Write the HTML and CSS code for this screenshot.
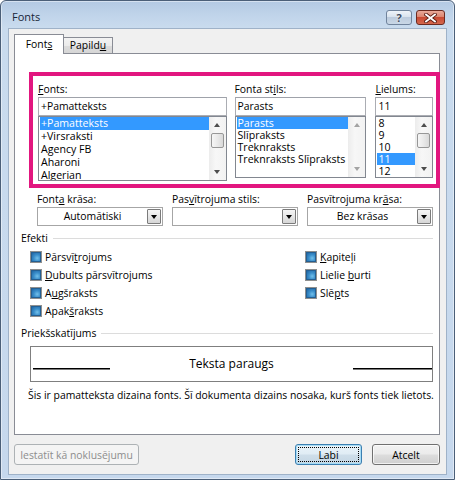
FILE: index.html
```html
<!DOCTYPE html>
<html lang="lv">
<head>
<meta charset="utf-8">
<title>Fonts</title>
<link rel="stylesheet" href="styles.css">
</head>
<body>
<div class="window">
  <div class="titlebar">
    <span class="title">Fonts</span>
    <div class="caption">
      <button class="cap help">?</button>
      <button class="cap close">
        <svg width="13" height="10" viewBox="0 0 13 10">
          <path d="M2 1.5 L11 8.5 M11 1.5 L2 8.5" stroke="#5b1d14" stroke-width="3.6" stroke-linecap="square"/>
          <path d="M2 1.5 L11 8.5 M11 1.5 L2 8.5" stroke="#fff" stroke-width="1.8" stroke-linecap="square"/>
        </svg>
      </button>
    </div>
  </div>

  <div class="client">
    <div class="tabs">
      <div class="tab active">Font<u>s</u></div>
      <div class="tab">Papild<u>u</u></div>
    </div>

    <div class="panel">
      <div class="highlight">
        <div class="col col-font">
          <div class="label"><u>F</u>onts:</div>
          <div class="field">+Pamatteksts</div>
          <div class="list list-tall">
            <ul class="items rows13">
              <li class="sel">+Pamatteksts</li>
              <li>+Virsraksti</li>
              <li>Agency FB</li>
              <li>Aharoni</li>
              <li>Algerian</li>
            </ul>
            <div class="scrollbar">
              <span class="arrow up"></span>
              <span class="track"><span class="thumb"></span></span>
              <span class="arrow down"></span>
            </div>
          </div>
        </div>

        <div class="col col-style">
          <div class="label">Fonta st<u>i</u>ls:</div>
          <div class="field">Parasts</div>
          <div class="list">
            <ul class="items">
              <li class="sel">Parasts</li>
              <li>Slīpraksts</li>
              <li>Treknraksts</li>
              <li>Treknraksts Slīpraksts</li>
            </ul>
            <div class="scrollbar disabled">
              <span class="arrow up"></span>
              <span class="track"></span>
              <span class="arrow down"></span>
            </div>
          </div>
        </div>

        <div class="col col-size">
          <div class="label"><u>L</u>ielums:</div>
          <div class="field">11</div>
          <div class="list">
            <ul class="items">
              <li>8</li>
              <li>9</li>
              <li>10</li>
              <li class="sel">11</li>
              <li>12</li>
            </ul>
            <div class="scrollbar">
              <span class="arrow up"></span>
              <span class="track"><span class="thumb"></span></span>
              <span class="arrow down"></span>
            </div>
          </div>
        </div>
      </div>

      <div class="combos">
        <div class="combo-col">
          <div class="label">Font<u>a</u> krāsa:</div>
          <div class="combo"><span class="value">Automātiski</span><span class="drop"></span></div>
        </div>
        <div class="combo-col">
          <div class="label">Pas<u>v</u>ītrojuma stils:</div>
          <div class="combo"><span class="value"></span><span class="drop"></span></div>
        </div>
        <div class="combo-col">
          <div class="label">Pasvītrojuma kr<u>ā</u>sa:</div>
          <div class="combo"><span class="value">Bez krāsas</span><span class="drop"></span></div>
        </div>
      </div>

      <div class="group"><span>Efekti</span><i class="rule-line"></i></div>
      <div class="effects">
        <label class="effect"><span class="cb"></span><span>Pārsvī<u>t</u>rojums</span></label>
        <label class="effect"><span class="cb"></span><span><u>K</u>apiteļi</span></label>
        <label class="effect"><span class="cb"></span><span><u>D</u>ubults pārsvītrojums</span></label>
        <label class="effect"><span class="cb"></span><span>Lielie <u>b</u>urti</span></label>
        <label class="effect"><span class="cb"></span><span>A<u>u</u>gšraksts</span></label>
        <label class="effect"><span class="cb"></span><span>Slē<u>p</u>ts</span></label>
        <label class="effect"><span class="cb"></span><span>Apak<u>š</u>raksts</span></label>
      </div>

      <div class="group group-preview"><span>Priekšskatījums</span><i class="rule-line"></i></div>
      <div class="preview">
        <span class="baseline left"></span>
        <span class="sample">Teksta paraugs</span>
        <span class="baseline right"></span>
      </div>
      <p class="note">Šis ir pamatteksta dizaina fonts. Šī dokumenta dizains nosaka, kurš fonts tiek lietots.</p>
    </div>

    <div class="actions">
      <button class="btn btn-disabled">Iestatīt kā noklusējumu</button>
      <button class="btn btn-default">Labi</button>
      <button class="btn">Atcelt</button>
    </div>
  </div>
</div>
</body>
</html>
```

FILE: styles.css
```css
* { box-sizing: border-box; }

html, body {
  margin: 0;
  padding: 0;
  background: #fff;
}

body {
  width: 455px;
  height: 480px;
  overflow: hidden;
  font-family: "Open Sans", "Noto Sans", "DejaVu Sans", sans-serif;
  font-size: 10.4px;
  color: #000;
}

u { text-decoration: underline; text-underline-offset: 1px; }

button { font: inherit; color: inherit; padding: 0; }

/* ---------- window frame ---------- */
.window {
  width: 455px;
  height: 480px;
  border: 1px solid #4b5f78;
  border-radius: 6px 6px 0 0;
  background: linear-gradient(180deg, #b3c9e3 0px, #c0d4ea 14px, #c9dbee 27px, #c6d8ed 100%);
  box-shadow: inset 0 0 0 1px rgba(255, 255, 255, 0.45);
  padding: 0 7px 4px;
  display: flex;
  flex-direction: column;
}

.titlebar {
  height: 27px;
  display: flex;
  align-items: flex-start;
  padding: 8px 2px 0 4px;
}

.title {
  font-size: 11px;
  line-height: 16px;
  color: #172538;
}

.caption {
  margin-left: auto;
  display: flex;
  gap: 4px;
  margin-top: 1px;
}

.cap {
  height: 15px;
  border-radius: 3px;
  display: flex;
  align-items: center;
  justify-content: center;
}

.help {
  width: 26px;
  border: 1px solid #70839c;
  background: linear-gradient(180deg, #eef3f9 0%, #d9e3ee 45%, #bccbdd 50%, #c9d7e6 100%);
  color: #3d4b5e;
  font-size: 11px;
  font-weight: 700;
  line-height: 13px;
  text-shadow: 0 0 2px #fff;
}

.close {
  width: 29px;
  border: 1px solid #6c2a20;
  background: linear-gradient(180deg, #e9a999 0%, #dc8570 45%, #c94a33 50%, #d4684e 100%);
}

.close svg { display: block; }

/* ---------- client area ---------- */
.client {
  flex: 1;
  background: #f0f0f0;
  border: 1px solid #9fb2c8;
  padding: 5px 6px 0 5px;
  display: flex;
  flex-direction: column;
}

.tabs {
  display: flex;
  align-items: flex-end;
  height: 20px;
  margin-bottom: -1px;
  position: relative;
  z-index: 1;
}

.tab {
  width: 50px;
  height: 16px;
  margin-bottom: 1px;
  border: 1px solid #898c95;
  border-bottom: none;
  background: linear-gradient(180deg, #f3f3f3 0%, #ebebeb 50%, #dddddd 50%, #d6d6d6 100%);
  text-align: center;
  line-height: 15px;
  margin-left: -1px;
}

.tab.active {
  height: 20px;
  margin-bottom: 0;
  margin-left: 0;
  background: #fff;
  line-height: 19px;
  position: relative;
  z-index: 2;
}

.panel {
  height: 382px;
  background: #fff;
  border: 1px solid #898c95;
  display: flex;
  flex-direction: column;
}

/* ---------- font / style / size block ---------- */
.highlight {
  margin: 18px -1px 0 14px;
  border: 4px solid #e2167f;
  padding: 6px 3px 3px 5px;
  display: flex;
  align-items: flex-start;
}

.col-font { width: 190px; }
.col-style { width: 133px; margin-left: 8px; }
.col-size { width: 58px; margin-left: 9px; }

.label {
  line-height: 14px;
  height: 14px;
  white-space: nowrap;
}

.field {
  margin-top: 1px;
  height: 19px;
  border: 1px solid #abadb3;
  border-top-color: #9fa2aa;
  padding-left: 2px;
  line-height: 17px;
  white-space: nowrap;
}

.list {
  height: 62px;
  border: 1px solid #828790;
  display: flex;
}

.list-tall { height: 65px; }

.items {
  flex: 1;
  list-style: none;
  margin: 0;
  padding: 0 0 0 1px;
  overflow: hidden;
  font-size: 10.6px;
}

.items li {
  line-height: 12px;
  height: 12px;
  padding-left: 1px;
  white-space: nowrap;
}

.rows13 li {
  line-height: 13px;
  height: 13px;
}

.rows13 li:last-child { line-height: 12px; }

.items li.sel {
  background: #3399ff;
  color: #fff;
}

.scrollbar {
  width: 17px;
  display: flex;
  flex-direction: column;
  background: linear-gradient(90deg, #ececec 0%, #f7f7f7 40%, #f2f2f2 100%);
}

.arrow {
  height: 16px;
  display: flex;
  align-items: center;
  justify-content: center;
  flex: none;
}

.arrow::before {
  content: "";
  width: 0;
  height: 0;
  border-left: 3.5px solid transparent;
  border-right: 3.5px solid transparent;
}

.arrow.up::before { border-bottom: 4px solid #4d4d4d; }
.arrow.down::before { border-top: 4px solid #4d4d4d; }

.scrollbar.disabled .arrow.up::before { border-bottom-color: #a3a3a3; }
.scrollbar.disabled .arrow.down::before { border-top-color: #a3a3a3; }

.track {
  flex: 1;
  display: flex;
  flex-direction: column;
}

.thumb {
  height: 15px;
  margin: 0 2px;
  border: 1px solid #979797;
  border-radius: 2px;
  background: linear-gradient(90deg, #f6f6f6 0%, #e9e9e9 50%, #d9d9d9 100%);
}

/* ---------- colour / underline combos ---------- */
.combos {
  display: flex;
  gap: 9px;
  margin: 4px 6px 0 22px;
}

.combo-col { width: 126px; }

.combo {
  margin-top: 1px;
  height: 19px;
  border: 1px solid #a6a6a6;
  background: #fff;
  display: flex;
  align-items: center;
}

.combo .value {
  flex: 1;
  text-align: center;
  line-height: 17px;
  white-space: nowrap;
}

.drop {
  width: 14px;
  height: 15px;
  margin-right: 1px;
  border: 1px solid #7b7b7b;
  border-radius: 1px;
  background: linear-gradient(180deg, #f5f5f5 0%, #e7e7e7 50%, #d6d6d6 100%);
  display: flex;
  align-items: center;
  justify-content: center;
}

.drop::before {
  content: "";
  width: 0;
  height: 0;
  border-left: 3.5px solid transparent;
  border-right: 3.5px solid transparent;
  border-top: 4px solid #000;
  margin-top: 1px;
}

/* ---------- group headings ---------- */
.group {
  display: flex;
  align-items: center;
  margin: 5px 6px 0 6px;
  line-height: 14px;
  height: 14px;
}

.rule-line {
  flex: 1;
  height: 1px;
  margin-left: 5px;
  background: #dcdcdc;
}

.group-preview { margin-top: 6px; }

/* ---------- effects ---------- */
.effects {
  display: grid;
  grid-template-columns: 275px auto;
  grid-auto-rows: 18px;
  margin: 3px 0 0 15px;
}

.effect {
  display: flex;
  align-items: center;
  gap: 3px;
  white-space: nowrap;
}

.cb {
  width: 12px;
  height: 12px;
  flex: none;
  border: 1px solid #8e8f8f;
  background: linear-gradient(135deg, #d8d8d8 0%, #f4f4f4 60%, #ffffff 100%);
  display: flex;
  align-items: center;
  justify-content: center;
}

.cb::before {
  content: "";
  width: 8px;
  height: 8px;
  border: 1px solid #245f92;
  background: radial-gradient(circle at 65% 65%, #72c0ea 0%, #3b8fcb 45%, #1f65a3 100%);
}

/* ---------- preview ---------- */
.preview {
  margin: 6px 6px 0 15px;
  height: 36px;
  border: 1px solid #7f7f7f;
  display: flex;
  align-items: center;
  padding: 0 0 0 2px;
}

.baseline {
  flex: none;
  height: 2px;
  margin-top: 10px;
  border-top: 1px solid #000;
  border-bottom: 1px solid #7a7a7a;
}

.baseline.left { width: 77px; }
.baseline.right { width: 79px; }

.sample {
  flex: 1;
  text-align: center;
  font-size: 12px;
  line-height: 16px;
}

.note {
  margin: 6px 0 0 13px;
  line-height: 14px;
  white-space: nowrap;
}

/* ---------- dialog buttons ---------- */
.actions {
  display: flex;
  gap: 10px;
  margin-top: 9px;
}

.btn {
  height: 21px;
  width: 68px;
  border: 1px solid #707070;
  border-radius: 3px;
  background: linear-gradient(180deg, #f2f2f2 0%, #ebebeb 48%, #dddddd 52%, #cfcfcf 100%);
  box-shadow: inset 0 0 0 1px rgba(255, 255, 255, 0.7);
  text-align: center;
  line-height: 18px;
  position: relative;
}

.btn-disabled {
  width: 125px;
  border-color: #adb2b5;
  background: #f4f4f4;
  box-shadow: none;
  color: #8d8d8d;
}

.btn-default {
  width: 67px;
  margin-left: auto;
  border-color: #3c7fb1;
  background: linear-gradient(180deg, #eaf3f9 0%, #e0ecf5 48%, #cfdeea 52%, #c4d6e4 100%);
  box-shadow: inset 0 0 0 1px #a6dcf5;
}

.btn-default::after {
  content: "";
  position: absolute;
  inset: 2px;
  border: 1px dotted #000;
}
```
